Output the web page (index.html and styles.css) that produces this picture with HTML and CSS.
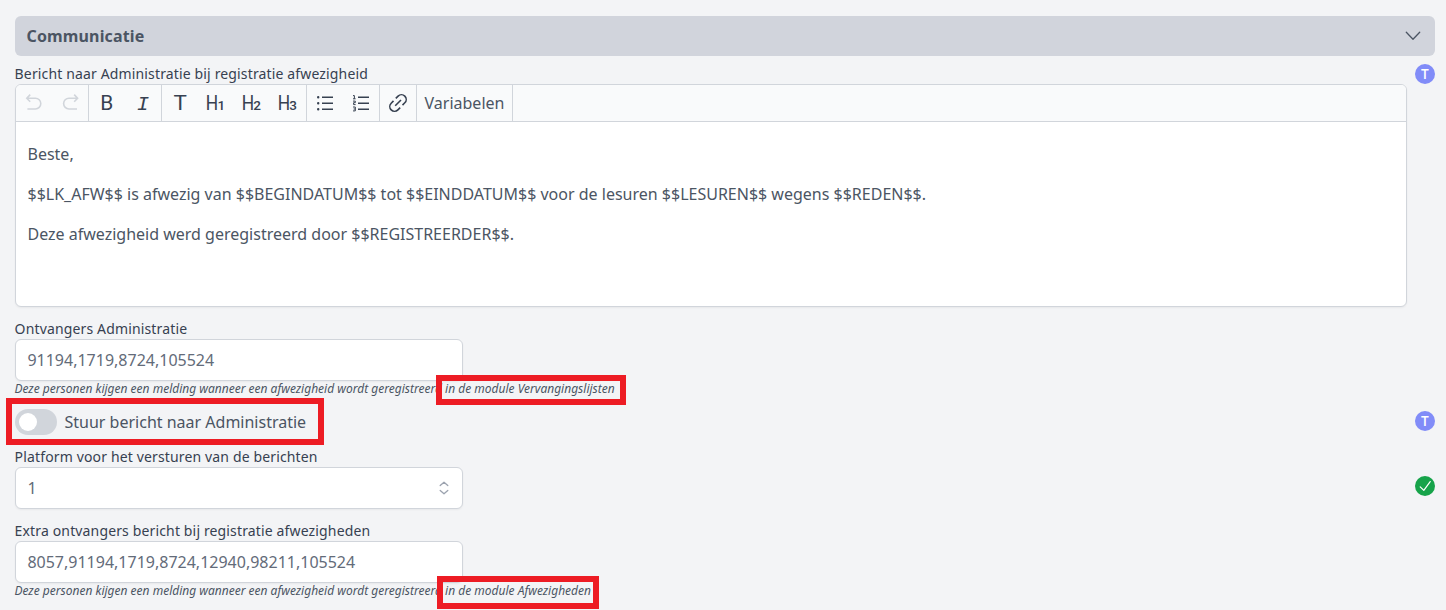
FILE: index.html
```html
<!DOCTYPE html>
<html lang="nl">
<head>
<meta charset="utf-8">
<title>Communicatie</title>
<link rel="stylesheet" href="styles.css">
</head>
<body>
<main class="page">
  <header class="section-head">
    <h2>Communicatie</h2>
    <svg class="chevron" width="16" height="16" viewBox="0 0 16 16"><path d="M1.3 4.3 8 11.2l6.7-6.9"/></svg>
  </header>

  <section class="row">
    <div class="main">
      <label class="label">Bericht naar Administratie bij registratie afwezigheid</label>
      <div class="editor">
        <div class="toolbar">
          <div class="group">
            <button class="tool disabled"><svg viewBox="0 0 36 36"><path d="M14.2 9.6 10.8 13.2l3.4 3.6M11.2 13.2h8.2a5.4 5.4 0 0 1 0 10.8H11.4"/></svg></button>
            <button class="tool disabled"><svg viewBox="0 0 36 36"><path d="M22.2 9.6 25.6 13.2l-3.4 3.6M25.2 13.2h-8.2a5.4 5.4 0 0 0 0 10.8h8"/></svg></button>
          </div>
          <div class="group">
            <button class="tool"><svg viewBox="0 0 36 36"><text x="11.2" y="25" class="cap" textLength="13" lengthAdjust="spacingAndGlyphs">B</text></svg></button>
            <button class="tool"><svg viewBox="0 0 36 36"><text x="11.8" y="25" class="ital">I</text></svg></button>
          </div>
          <div class="group">
            <button class="tool"><svg viewBox="0 0 36 36"><text x="11.4" y="25" class="cap" textLength="13.4" lengthAdjust="spacingAndGlyphs">T</text></svg></button>
            <button class="tool"><svg viewBox="0 0 36 36"><text x="7.8" y="25" class="cap" textLength="12.4" lengthAdjust="spacingAndGlyphs">H</text><text x="19.6" y="25" class="num">1</text></svg></button>
            <button class="tool"><svg viewBox="0 0 36 36"><text x="7.8" y="25" class="cap" textLength="12.4" lengthAdjust="spacingAndGlyphs">H</text><text x="19.2" y="25" class="num">2</text></svg></button>
            <button class="tool"><svg viewBox="0 0 36 36"><text x="7.8" y="25" class="cap" textLength="12.4" lengthAdjust="spacingAndGlyphs">H</text><text x="19.2" y="25" class="num">3</text></svg></button>
          </div>
          <div class="group">
            <button class="tool"><svg viewBox="0 0 36 36"><path d="M15 12.2h11M15 18.2h11M15 24.2h11"/><path class="dots" d="M11.2 12.2h.01M11.2 18.2h.01M11.2 24.2h.01"/></svg></button>
            <button class="tool"><svg viewBox="0 0 36 36"><path d="M15 12.2h11M15 18.2h11M15 24.2h11"/><path class="thin" d="M10 10.6h1.4v3.2M10 13.8h2.6M10 16.1h2.3v1.6H10.6v1.9h2M10 22h2.3v3.9H10M10.6 24h1.7"/></svg></button>
          </div>
          <div class="group">
            <button class="tool"><svg viewBox="0 0 36 36"><path d="M15.2 20.8l5.8-5.8M15.8 13.4l2.3-2.3a4.7 4.7 0 0 1 6.7 6.7l-2.3 2.3M13.5 15.9l-2.3 2.3a4.7 4.7 0 0 0 6.7 6.7l2.3-2.3"/></svg></button>
          </div>
          <div class="group"><button class="variables">Variabelen</button></div>
        </div>
        <div class="content">
          <p>Beste,</p>
          <p>$$LK_AFW$$ is afwezig van $$BEGINDATUM$$ tot $$EINDDATUM$$ voor de lesuren $$LESUREN$$ wegens $$REDEN$$.</p>
          <p>Deze afwezigheid werd geregistreerd door $$REGISTREERDER$$.</p>
        </div>
      </div>
    </div>
    <span class="badge">T</span>
  </section>

  <section class="field">
    <label class="label">Ontvangers Administratie</label>
    <div class="input">91194,1719,8724,105524</div>
    <p class="help">Deze personen kijgen een melding wanneer een afwezigheid wordt geregistreerd
      <span class="marked">in de module Vervangingslijsten<i class="mark mark-lists"></i></span></p>
  </section>

  <section class="row toggle-row">
    <div class="toggle-field">
      <span class="switch"><span class="knob"></span></span>
      <span class="toggle-text">Stuur bericht naar Administratie</span>
      <i class="mark mark-toggle"></i>
    </div>
    <span class="badge">T</span>
  </section>

  <section class="row platform-row">
    <div class="field">
      <label class="label">Platform voor het versturen van de berichten</label>
      <div class="input select"><span>1</span>
        <svg width="10" height="14" viewBox="0 0 10 14"><path d="M1.2 4.6 5 1.2l3.8 3.4M1.2 9.4 5 12.8l3.8-3.4"/></svg>
      </div>
    </div>
    <span class="badge ok"><svg width="20" height="20" viewBox="0 0 20 20"><path d="M5.2 10.8 8.8 14.4 15.2 5.6"/></svg></span>
  </section>

  <section class="field">
    <label class="label">Extra ontvangers bericht bij registratie afwezigheden</label>
    <div class="input">8057,91194,1719,8724,12940,98211,105524</div>
    <p class="help">Deze personen kijgen een melding wanneer een afwezigheid wordt geregistreerd
      <span class="marked">in de module Afwezigheden<i class="mark mark-absences"></i></span></p>
  </section>
</main>
</body>
</html>
```

FILE: styles.css
```css
* { box-sizing: border-box; margin: 0; padding: 0; }
html, body { height: 610px; overflow: hidden; }
body {
  background: #f3f4f6;
  color: #4b5563;
  font-family: "Noto Sans", sans-serif;
  font-size: 16px;
  line-height: 24px;
}
.page { padding: 16px 11px 0 15px; }
.section-head {
  display: flex; align-items: center; justify-content: space-between;
  height: 40px; padding: 0 14px 0 11.5px;
  border-radius: 6px; background: #d1d4dc;
}
.section-head h2 { font-size: 16px; font-weight: 700; letter-spacing: .15px; }
.chevron { fill: none; stroke: #4b5563; stroke-width: 1.3; stroke-linecap: round; stroke-linejoin: round; }
.row { display: flex; justify-content: space-between; align-items: flex-start; }
.main { width: 1392px; padding-top: 8px; }
.main + .badge { margin-top: 8px; }
.label { display: block; color: #374151; font-size: 14px; line-height: 20px; letter-spacing: .145px; text-indent: -.4px; }
.editor {
  height: 223px; border: 1px solid #d1d5db; border-radius: 6px;
  background: #fff; overflow: hidden; box-shadow: 0 1px 2px rgba(0, 0, 0, .05);
}
.toolbar { display: flex; height: 37px; background: #f9fafb; border-bottom: 1px solid #d1d5db; }
.group { display: flex; border-right: 1px solid #d1d5db; }
.group button { border: 0; background: none; height: 36px; color: #374151; }
.tool { width: 36px; }
.tool svg { display: block; width: 36px; height: 36px; fill: none; stroke: currentColor; stroke-width: 1.6; }
.group .disabled { color: #d1d5db; }
.tool text { fill: currentColor; stroke: none; }
.cap { font: 400 19.5px Roboto, sans-serif; }
.ital { font: italic 400 20.5px "Liberation Mono", monospace; }
.num { font: 500 13.5px Roboto, sans-serif; }
.tool .dots { stroke-width: 2.4; stroke-linecap: round; }
.tool .thin { stroke-width: 1; }
.group .variables { width: 95px; font: 16px/24px "Noto Sans", sans-serif; color: #4b5563; }
.content { padding: 20px 11.5px; color: #4b5563; }
.content p { margin-bottom: 16px; }
.badge {
  display: flex; align-items: center; justify-content: center;
  width: 20px; height: 20px; border-radius: 50%;
  background: #818cf8; color: #fff; font: 600 12.5px Inter, sans-serif;
}
.ok { background: #16a34a; }
.ok path { fill: none; stroke: #fff; stroke-width: 1.2; stroke-linecap: round; stroke-linejoin: round; }
.field { width: 448px; margin-top: 12px; }
.input {
  display: flex; align-items: center; justify-content: space-between;
  height: 42px; padding: 0 11.4px; border: 1px solid #d1d5db; border-radius: 6px;
  background: #fff; color: #636b79; box-shadow: 0 1px 2px rgba(0, 0, 0, .05);
}
.select { padding-right: 13px; }
.select svg { fill: none; stroke: #9ca3af; stroke-width: 1.3; stroke-linecap: round; stroke-linejoin: round; }
.help { font-size: 12px; line-height: 16px; font-style: italic; white-space: nowrap; text-indent: -.5px; }
.marked, .toggle-field { position: relative; }
.toggle-row { margin-top: 12px; height: 26px; }
.toggle-field { display: flex; align-items: center; gap: 7.5px; height: 26px; }
.toggle-row .badge { margin-top: 2px; }
.switch { width: 42px; height: 26px; padding: 4px; border-radius: 13px; background: #d1d5db; }
.knob { display: block; width: 18px; height: 18px; border-radius: 50%; background: #fff; }
.toggle-text { color: #4b5563; }
.platform-row .badge { margin-top: 41px; }
.mark { position: absolute; border: 6px solid #ed1c24; }
.mark-lists { left: -9.2px; top: -5px; width: 190px; height: 30px; }
.mark-absences { left: -8.2px; top: -6px; width: 162px; height: 33px; }
.mark-toggle { left: -9px; top: -11px; width: 318px; height: 47px; }
```
